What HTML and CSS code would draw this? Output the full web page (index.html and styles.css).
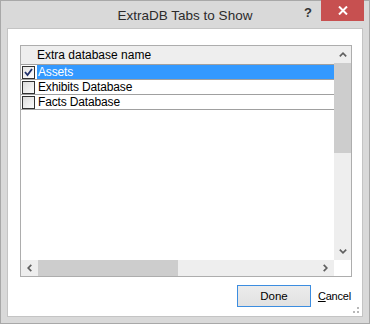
FILE: index.html
```html
<!DOCTYPE html>
<html lang="en">
<head>
  <meta charset="UTF-8" />
  <title>ExtraDB Tabs to Show</title>
  <link rel="stylesheet" href="styles.css">
</head>
<body>

  <div class="window">
    <div class="titlebar">
      <span></span>
      <span class="title">ExtraDB Tabs to Show</span>
      <div class="caption-btns">
        <span class="help">?</span>
        <span class="close">
          <svg width="10" height="9" viewBox="0 0 10 9"><path d="M1 0.5 L9 8.5 M9 0.5 L1 8.5" stroke="#fff" stroke-width="2" /></svg>
        </span>
      </div>
    </div>

    <div class="client">
      <div class="listbox">
        <div class="list-content">
          <div class="list-header">Extra database name</div>
          <div class="row">
            <span class="check checked">
              <svg width="11" height="11" viewBox="0 0 11 11"><path d="M2 5 L4.5 8 L9 2" stroke="#21316b" stroke-width="1.8" fill="none" /></svg>
            </span>
            <span class="label selected">Assets</span>
          </div>
          <div class="row">
            <span class="check"></span>
            <span class="label">Exhibits Database</span>
          </div>
          <div class="row">
            <span class="check"></span>
            <span class="label">Facts Database</span>
          </div>
        </div>

        <div class="vscroll">
          <span class="arrow">
            <svg width="8" height="5" viewBox="0 0 8 5"><path d="M0.8 4.3 L4 1.2 L7.2 4.3" stroke="#606060" stroke-width="1.7" fill="none" /></svg>
          </span>
          <span class="thumb"></span>
          <span class="track"></span>
          <span class="arrow">
            <svg width="8" height="5" viewBox="0 0 8 5"><path d="M0.8 0.7 L4 3.8 L7.2 0.7" stroke="#606060" stroke-width="1.7" fill="none" /></svg>
          </span>
        </div>

        <div class="hscroll">
          <span class="arrow">
            <svg width="5" height="8" viewBox="0 0 5 8"><path d="M4.3 0.8 L1.2 4 L4.3 7.2" stroke="#606060" stroke-width="1.7" fill="none" /></svg>
          </span>
          <span class="thumb"></span>
          <span class="track"></span>
          <span class="arrow">
            <svg width="5" height="8" viewBox="0 0 5 8"><path d="M0.7 0.8 L3.8 4 L0.7 7.2" stroke="#606060" stroke-width="1.7" fill="none" /></svg>
          </span>
        </div>

        <div class="corner"></div>
      </div>

      <div class="footer">
        <button class="btn-done">Done</button>
        <span class="cancel"><u>C</u>ancel</span>
      </div>

      <svg class="grip" width="8" height="7" viewBox="0 0 8 7">
        <rect x="5" y="0" width="2" height="2" fill="#b8b8b8" />
        <rect x="1" y="4" width="2" height="2" fill="#b8b8b8" />
        <rect x="5" y="4" width="2" height="2" fill="#b8b8b8" />
      </svg>
    </div>
  </div>

</body>
</html>
```

FILE: styles.css
```css
body {
  margin: 0;
  font-family: 'Liberation Sans', Arial, sans-serif;
}

.window {
  width: 370px;
  height: 324px;
  box-sizing: border-box;
  border: 1px solid #a8a8a8;
  background: #d9d9d9;
  display: flex;
  flex-direction: column;
}

.titlebar {
  height: 27px;
  display: grid;
  grid-template-columns: 1fr auto 1fr;
  align-items: start;
}

.title {
  font-size: 13.5px;
  color: #2b2b2b;
  line-height: 27px;
  padding-top: 1px;
}

.caption-btns {
  justify-self: end;
  display: flex;
  align-items: flex-start;
  margin-top: -1px;
  margin-right: 5px;
}

.help {
  font-weight: bold;
  font-size: 13px;
  color: #333;
  margin-top: 5px;
  margin-right: 9px;
}

.close {
  width: 43px;
  height: 21px;
  background: #c75050;
  display: flex;
  align-items: center;
  justify-content: center;
}

.client {
  flex: 1;
  position: relative;
  margin: 0 6px 6px;
  border: 1px solid #c4c4c4;
  background: #fff;
  padding: 16px 10px 0 12px;
}

.listbox {
  height: 232px;
  box-sizing: border-box;
  border: 1px solid #adadad;
  display: grid;
  grid-template-columns: 1fr 17px;
  grid-template-rows: 1fr 16px;
  font-size: 12px;
  color: #000;
}

.list-content {
  overflow: hidden;
}

.list-header {
  height: 18px;
  line-height: 18px;
  background: #eeeeee;
  border-bottom: 1px solid #a0a0a0;
  padding-left: 16px;
}

.row {
  height: 14px;
  border-bottom: 1px solid #a0a0a0;
  display: flex;
  align-items: center;
}

.check {
  width: 11px;
  height: 11px;
  margin: 0 2px 0 1px;
  border: 1px solid #333;
  background: linear-gradient(135deg, #dcdcdc, #fcfcfc);
  display: flex;
  align-items: center;
  justify-content: center;
}

.check.checked {
  background: linear-gradient(135deg, #e4e4e4, #ffffff);
}

.label {
  flex: 1;
  height: 14px;
  line-height: 14px;
  padding-left: 1px;
  letter-spacing: -0.15px;
}

.label.selected {
  background: #3399ff;
  color: #fff;
}

.vscroll {
  grid-row: 1;
  grid-column: 2;
  background: #eeeeee;
  display: flex;
  flex-direction: column;
}

.vscroll .arrow {
  height: 17px;
  display: flex;
  align-items: center;
  justify-content: center;
}

.vscroll .thumb {
  height: 90px;
  background: #cdcdcd;
}

.vscroll .track {
  flex: 1;
}

.hscroll {
  grid-row: 2;
  grid-column: 1;
  background: #eeeeee;
  display: flex;
}

.hscroll .arrow {
  width: 17px;
  display: flex;
  align-items: center;
  justify-content: center;
}

.hscroll .thumb {
  width: 140px;
  background: #cdcdcd;
}

.hscroll .track {
  flex: 1;
}

.corner {
  background: #fff;
}

.footer {
  display: flex;
  justify-content: flex-end;
  align-items: center;
  margin-top: 8px;
  padding-right: 1px;
}

.btn-done {
  width: 74px;
  height: 22px;
  border: 1px solid #3c8de0;
  background: linear-gradient(#ececec, #e2e2e2);
  font-family: 'Liberation Sans', Arial, sans-serif;
  font-size: 11.5px;
  color: #000;
  padding: 0;
}

.cancel {
  margin-left: 7px;
  font-size: 11px;
  letter-spacing: -0.2px;
  color: #000;
}

.grip {
  position: absolute;
  right: 2px;
  bottom: 2px;
}
```
